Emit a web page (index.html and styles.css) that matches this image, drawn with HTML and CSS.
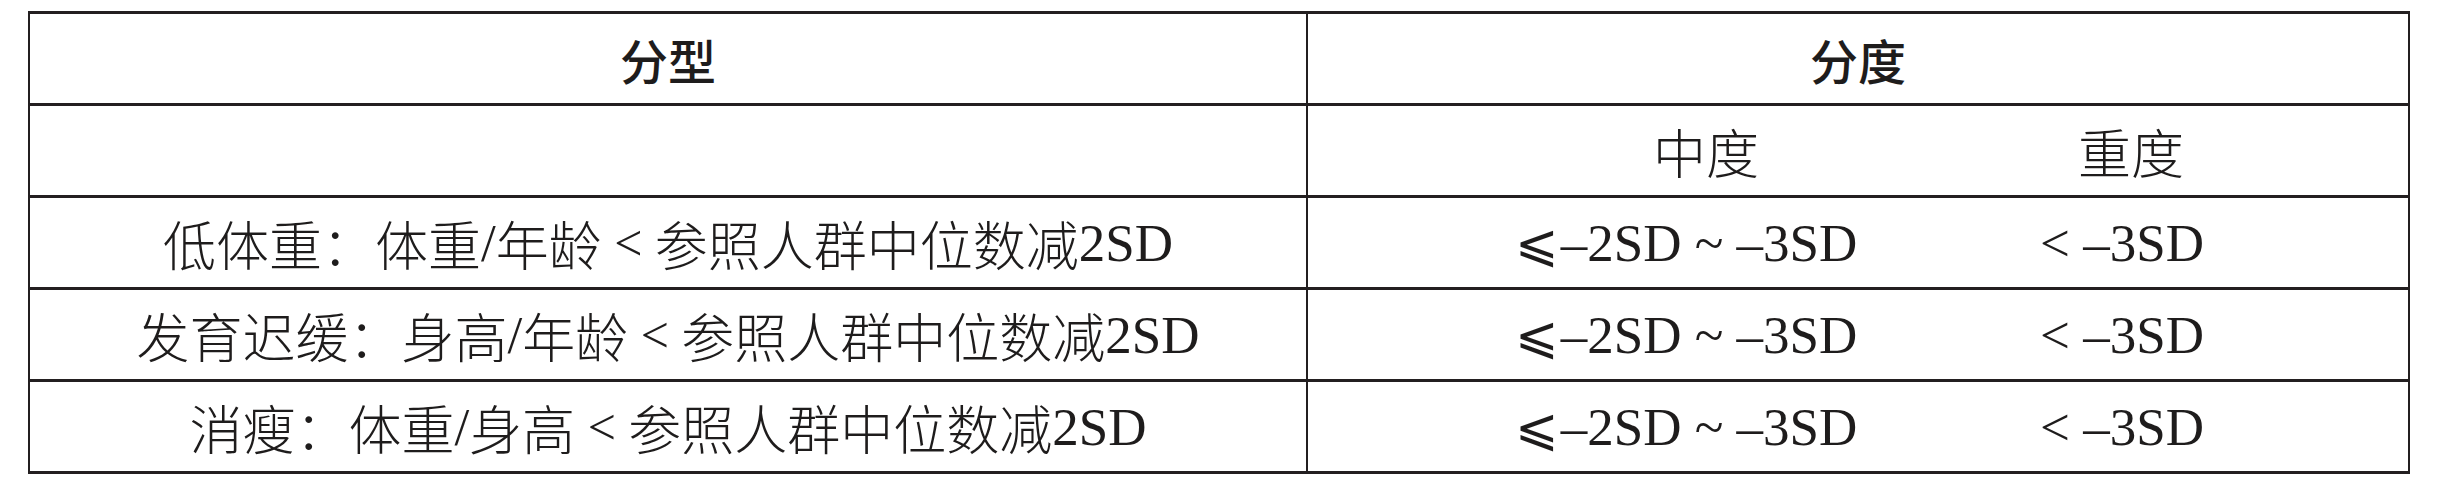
FILE: index.html
```html
<!DOCTYPE html>
<html lang="zh-CN">
<head>
<meta charset="utf-8">
<title>分型与分度</title>
<link rel="stylesheet" href="styles.css">
</head>
<body>
<div class="tbl">
  <div class="row">
    <div class="cell left head">分型</div>
    <div class="cell right head">分度</div>
  </div>
  <div class="row">
    <div class="cell left"></div>
    <div class="cell right split">
      <div class="sa sa-h">中度</div>
      <div class="sb sb-h">重度</div>
    </div>
  </div>
  <div class="row">
    <div class="cell left body">低体重：体重<span class="lat">/</span>年龄<span class="lat lt2"> &lt; </span>参照人群中位数减<span class="lat">2SD</span></div>
    <div class="cell right split">
      <div class="sa lat"><span class="le">⩽</span>–2SD ~ –3SD</div>
      <div class="sb lat">&lt; –3SD</div>
    </div>
  </div>
  <div class="row">
    <div class="cell left body">发育迟缓：身高<span class="lat">/</span>年龄<span class="lat lt2"> &lt; </span>参照人群中位数减<span class="lat">2SD</span></div>
    <div class="cell right split">
      <div class="sa lat"><span class="le">⩽</span>–2SD ~ –3SD</div>
      <div class="sb lat">&lt; –3SD</div>
    </div>
  </div>
  <div class="row">
    <div class="cell left body">消瘦：体重<span class="lat">/</span>身高<span class="lat lt2"> &lt; </span>参照人群中位数减<span class="lat">2SD</span></div>
    <div class="cell right split">
      <div class="sa lat"><span class="le">⩽</span>–2SD ~ –3SD</div>
      <div class="sb lat">&lt; –3SD</div>
    </div>
  </div>
</div>
</body>
</html>
```

FILE: styles.css
```css
html, body {
  margin: 0;
  padding: 0;
  background: #ffffff;
}

body {
  color: #1e1c1c;
  font-family: "Liberation Serif", "Noto Sans CJK SC", serif;
  font-weight: 300;
  font-size: 53px;
}

.tbl {
  margin: 11px 0 0 28px;
  width: 2382px;
  box-sizing: border-box;
  border-left: 2px solid #231f20;
  border-right: 2px solid #231f20;
  border-top: 3px solid #231f20;
}

.row {
  display: grid;
  grid-template-columns: 1278px 1100px;
  height: 92px;
  box-sizing: border-box;
  border-bottom: 3px solid #231f20;
}

.cell {
  display: flex;
  align-items: center;
  justify-content: center;
  box-sizing: border-box;
  white-space: pre;
}

.left {
  border-right: 2px solid #231f20;
}

.body {
  font-family: "Noto Sans CJK SC", sans-serif;
}

.head {
  font-family: "Noto Sans CJK SC", sans-serif;
  font-weight: 500;
  font-size: 48px;
}

.split {
  display: grid;
  grid-template-columns: 600px 500px;
  align-items: center;
}

.sa, .sb {
  text-align: center;
  box-sizing: border-box;
  font-family: "Noto Sans CJK SC", sans-serif;
}

.sa { padding-left: 156px; }
.sb { padding-right: 72px; }
.sa-h { padding-left: 196px; }
.sb-h { padding-right: 54px; }

.sa.lat, .sb.lat, .lat {
  font-family: "Liberation Serif", serif;
  font-weight: 400;
}

.lt2 {
  font-size: 50px;
}

.le {
  font-family: "DejaVu Sans", "DejaVu Serif", serif;
  font-weight: 200;
  font-size: 52px;
  margin-right: 2px;
}
```
